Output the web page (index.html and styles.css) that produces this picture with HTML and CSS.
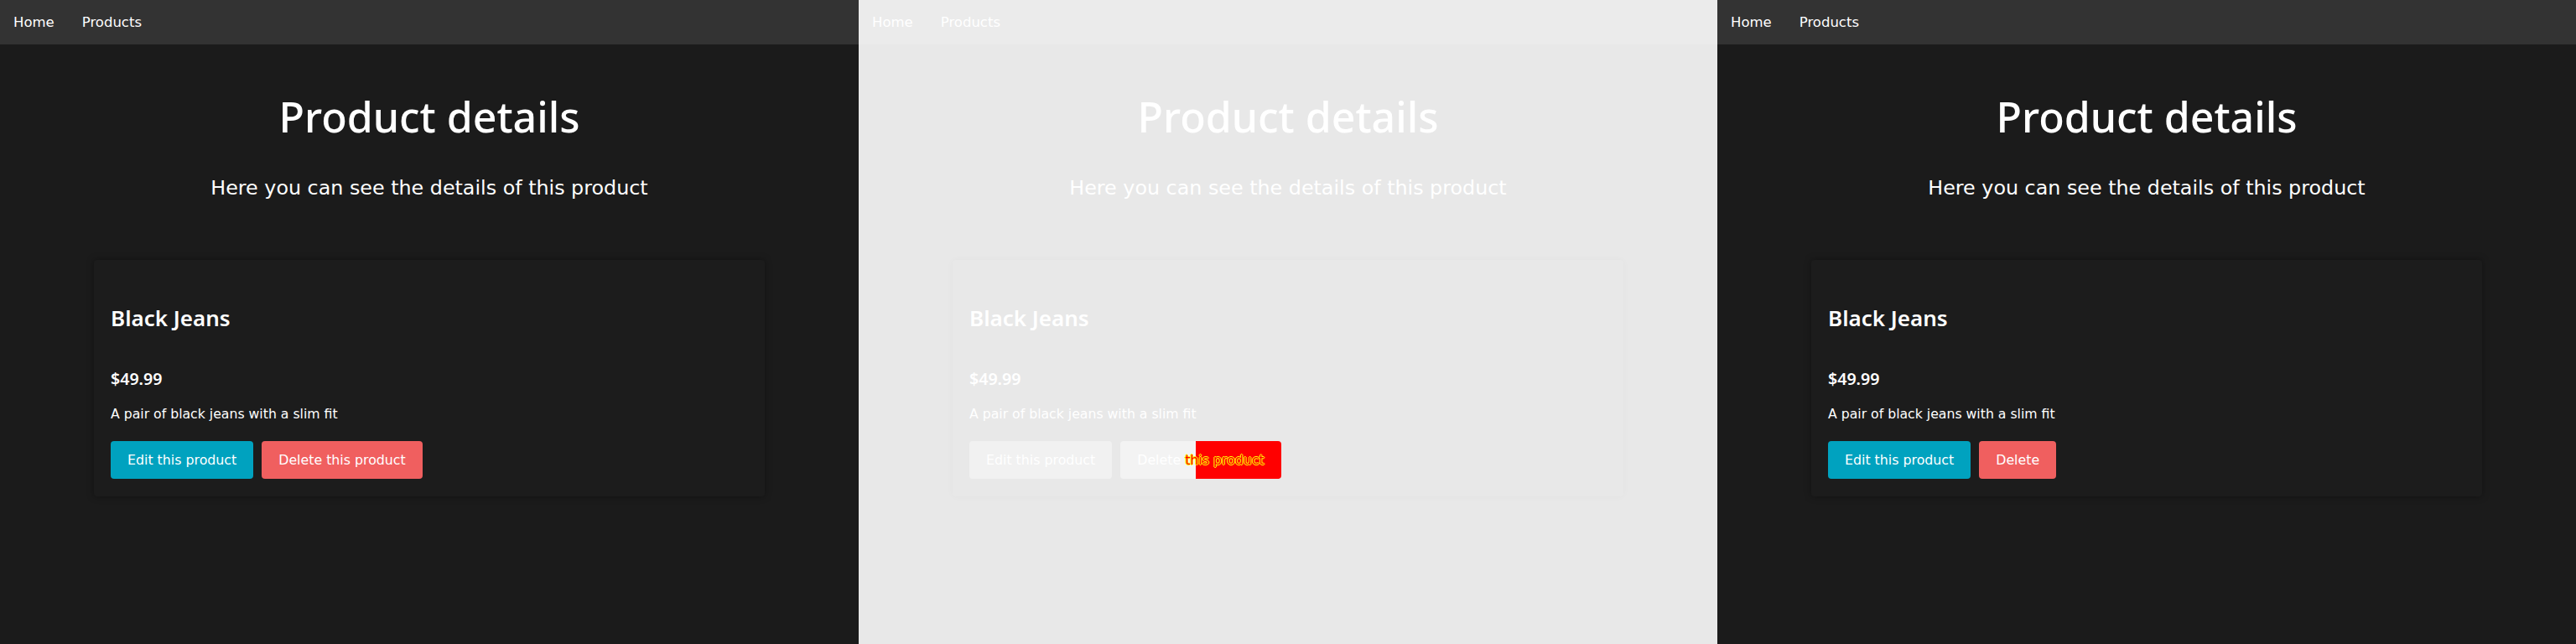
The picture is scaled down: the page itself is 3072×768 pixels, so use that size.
FILE: index.html
```html
<!DOCTYPE html>
<html lang="en">
<head>
<meta charset="utf-8">
<title>Product details</title>
<link rel="stylesheet" href="styles.css">
</head>
<body>
<div class="strip">

  <section class="panel dark">
    <nav class="nav"><a class="nav-link">Home</a><a class="nav-link">Products</a></nav>
    <main class="main">
      <h1 class="title">Product details</h1>
      <p class="subtitle">Here you can see the details of this product</p>
      <div class="card">
        <h2 class="name">Black Jeans</h2>
        <p class="price">$49.99</p>
        <p class="desc">A pair of black jeans with a slim fit</p>
        <div class="actions">
          <button class="btn btn-edit">Edit this product</button>
          <button class="btn btn-delete">Delete this product</button>
        </div>
      </div>
    </main>
  </section>

  <section class="panel diff">
    <nav class="nav"><a class="nav-link">Home</a><a class="nav-link">Products</a></nav>
    <main class="main">
      <h1 class="title">Product details</h1>
      <p class="subtitle">Here you can see the details of this product</p>
      <div class="card">
        <h2 class="name">Black Jeans</h2>
        <p class="price">$49.99</p>
        <p class="desc">A pair of black jeans with a slim fit</p>
        <div class="actions">
          <button class="btn btn-edit">Edit this product</button>
          <button class="btn btn-delete btn-changed">Delete <span class="changed">this product</span></button>
        </div>
      </div>
    </main>
  </section>

  <section class="panel dark">
    <nav class="nav"><a class="nav-link">Home</a><a class="nav-link">Products</a></nav>
    <main class="main">
      <h1 class="title">Product details</h1>
      <p class="subtitle">Here you can see the details of this product</p>
      <div class="card">
        <h2 class="name">Black Jeans</h2>
        <p class="price">$49.99</p>
        <p class="desc">A pair of black jeans with a slim fit</p>
        <div class="actions">
          <button class="btn btn-edit">Edit this product</button>
          <button class="btn btn-delete">Delete</button>
        </div>
      </div>
    </main>
  </section>

</div>
</body>
</html>
```
FILE: styles.css
```css
* { box-sizing: border-box; }
html, body { margin: 0; padding: 0; }
body {
  width: 3072px;
  height: 768px;
  overflow: hidden;
  font-family: "DejaVu Sans", "Noto Sans", sans-serif;
}
.strip { display: flex; width: 3072px; height: 768px; }

.panel {
  width: 1024px;
  height: 768px;
  flex: 0 0 1024px;
  overflow: hidden;
  display: flex;
  flex-direction: column;
}

/* ---------- dark (before / after) ---------- */
.dark { background: #1b1b1b; color: #ffffff; }
.dark .nav { background: #333333; }
.dark .card { background: #1c1c1c; box-shadow: 0 0 9px rgba(0, 0, 0, 0.35); }
.dark .btn-edit { background: #00a2bf; }
.dark .btn-delete { background: #f05f5f; }

/* ---------- diff ---------- */
.diff { background: #e8e8e8; color: #ffffff; }
.diff .nav { background: #ebebeb; }
.diff .card { background: #e8e8e8; box-shadow: 0 0 9px rgba(0, 0, 0, 0.03); }
.diff .btn-edit { background: #f1f1f1; }
.diff .btn-delete { background: #f3f3f3; }
.diff .btn-changed {
  background: linear-gradient(90deg, #f3f3f3 0, #f3f3f3 90px, #ff0000 90px, #ff0000 100%);
}
.changed {
  color: #ff0000;
  text-shadow: 1px 0 0 #ffff00, -1px 0 0 #ffff00, 0 1px 0 #ffff00, 0 -1px 0 #ffff00;
}

/* ---------- nav ---------- */
.nav {
  height: 53px;
  flex: 0 0 53px;
  display: flex;
  align-items: stretch;
  padding: 0 16px;
  gap: 33px;
}
.nav-link {
  font-size: 16.5px;
  line-height: 53px;
  color: #ffffff;
}

/* ---------- main ---------- */
.main {
  display: flex;
  flex-direction: column;
  align-items: center;
}
.title {
  margin: 56px 0 0;
  font-family: "Noto Sans", sans-serif;
  font-weight: 500;
  font-size: 50px;
  line-height: 60px;
  text-align: center;
}
.subtitle {
  margin: 41px 0 0;
  font-size: 23.8px;
  line-height: 28px;
  text-align: center;
}

.card {
  margin-top: 72px;
  width: 800px;
  height: 282px;
  padding: 53px 20px 20px;
  border-radius: 4px;
  display: flex;
  flex-direction: column;
}
.name {
  margin: 0;
  font-family: "Noto Sans", sans-serif;
  font-weight: 600;
  font-size: 26px;
  line-height: 32px;
}
.price {
  margin: 45px 0 0;
  font-family: "Noto Sans", sans-serif;
  font-weight: 600;
  font-size: 19.6px;
  line-height: 24px;
}
.desc {
  margin: 20px 0 0;
  font-size: 15.7px;
  line-height: 20px;
}
.actions {
  margin-top: 22px;
  display: flex;
  gap: 10px;
}
.btn {
  height: 45px;
  padding: 0 20px;
  border: 0;
  border-radius: 4px;
  font-family: "DejaVu Sans", sans-serif;
  font-size: 15.8px;
  line-height: 45px;
  color: #ffffff;
  white-space: pre;
}
```
